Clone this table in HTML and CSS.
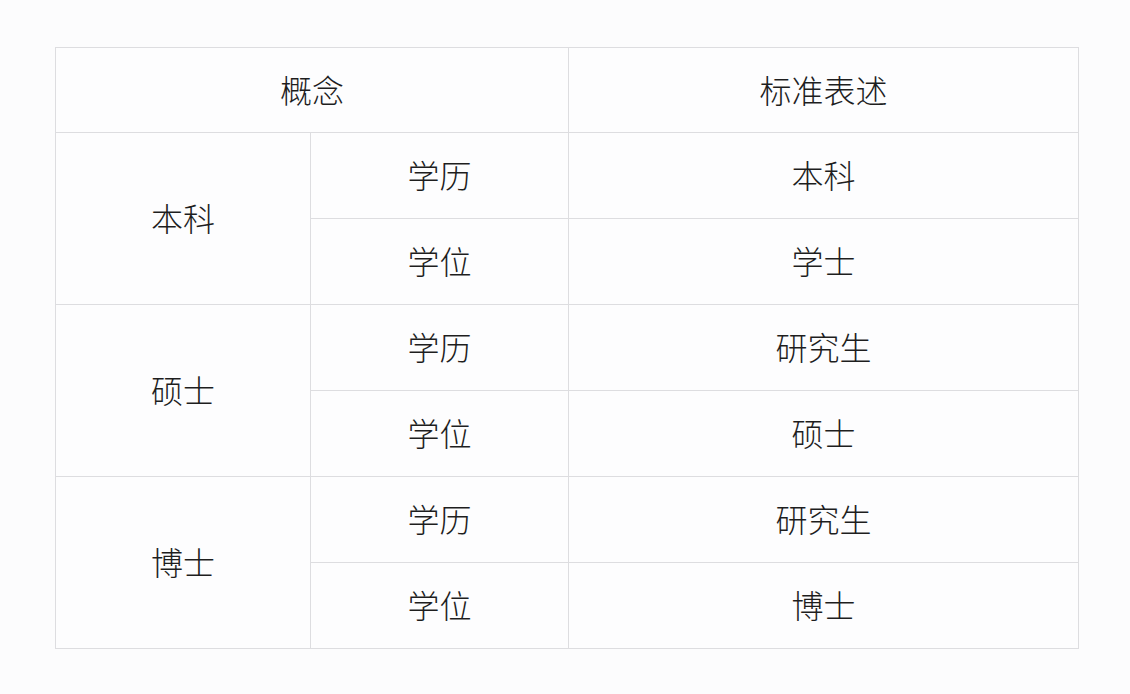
FILE: index.html
```html
<!DOCTYPE html>
<html lang="zh">
<head>
<meta charset="utf-8">
<link rel="stylesheet" href="styles.css">
</head>
<body>
<div class="page">
<table class="grid">
  <colgroup><col class="c1"><col class="c2"><col class="c3"></colgroup>
  <tr class="head"><td colspan="2">概念</td><td>标准表述</td></tr>
  <tr><td rowspan="2">本科</td><td>学历</td><td>本科</td></tr>
  <tr><td>学位</td><td>学士</td></tr>
  <tr><td rowspan="2">硕士</td><td>学历</td><td>研究生</td></tr>
  <tr><td>学位</td><td>硕士</td></tr>
  <tr><td rowspan="2">博士</td><td>学历</td><td>研究生</td></tr>
  <tr><td>学位</td><td>博士</td></tr>
</table>
</div>
</body>
</html>
```
FILE: styles.css
```css
html, body { margin: 0; padding: 0; background: #fcfcfd; }
.page { padding: 47px 0 0 55px; }
.grid {
  border-collapse: collapse;
  width: 1023px;
  table-layout: fixed;
  font-family: "Noto Sans CJK SC", "Noto Sans", sans-serif;
  font-weight: 300;
  font-size: 32px;
  color: #1e1e1e;
  background: #fdfdfe;
}
.c1 { width: 255px; }
.c2 { width: 258px; }
.c3 { width: 510px; }
.grid td {
  border: 1px solid #dddde0;
  text-align: center;
  vertical-align: middle;
  height: 82px;
  padding: 0 0 3px 0;
  line-height: 1;
}
.grid .head td { height: 81px; }
```
